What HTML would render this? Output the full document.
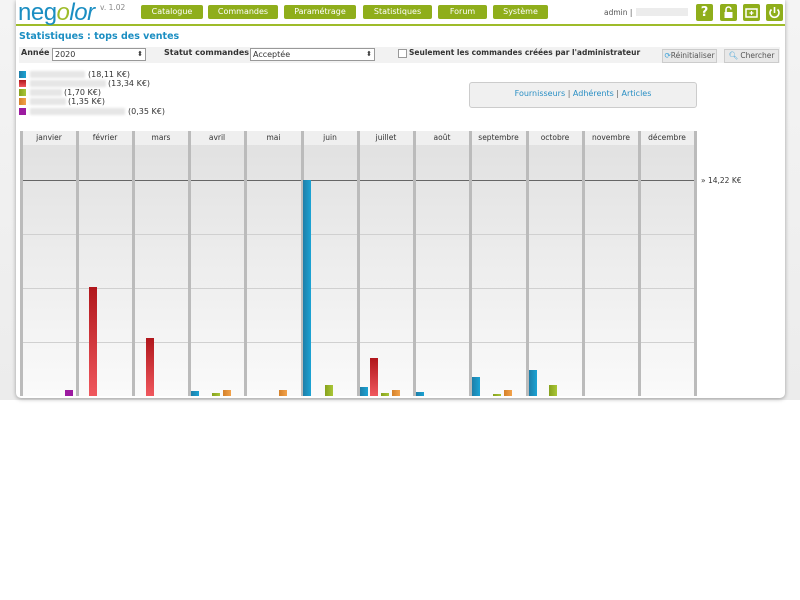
<!DOCTYPE html>
<html><head><meta charset="utf-8"><style>
body{margin:0;width:800px;height:600px;background:#fff;font-family:"DejaVu Sans","Liberation Sans",sans-serif;font-size:8px;color:#333;position:relative;overflow:hidden}
.bg{position:absolute;left:0;top:0;width:800px;height:400px;background:linear-gradient(#f4f4f4,#ececec)}
.wrap{position:absolute;left:16px;top:0;width:769px;height:398px;background:#fff;border-radius:0 0 5px 5px;box-shadow:0 1px 4px rgba(0,0,0,.35)}
.a{position:absolute}
.btn{position:absolute;top:5px;height:14px;background:#8fae1b;color:#fff;border-radius:2px;text-align:center;line-height:14px;font-size:8px}
.ico{position:absolute;top:4px;width:17px;height:17px;background:#8fae1b;border-radius:2px;color:#fff;font-weight:bold;text-align:center;line-height:17px;font-size:13px}
.sel{position:absolute;top:48px;height:11px;border:1px solid #999;background:#fff;font-size:8px;line-height:11px;padding-left:2px;box-sizing:content-box}
.sel:after{content:"⬍";position:absolute;right:2px;top:0;font-size:7px}
.sw{position:absolute;left:19px;width:7px;height:7px}
.blur{position:absolute;left:30px;height:7px;background:#e6e6e6;filter:blur(1px)}
.col{position:absolute;top:131px;height:265px;border-left:3px solid #bbb;box-sizing:border-box}
.hd{position:absolute;top:131px;height:14px;text-align:center;font-size:7.5px;line-height:14px;color:#333}
.bar{position:absolute;width:8px}
.b{background:linear-gradient(90deg,#1e7ea8,#1ba3d4)}
.r{background:linear-gradient(#b0161b,#f0585e)}
.g{background:linear-gradient(90deg,#87a21d,#a9c637)}
.o{background:linear-gradient(90deg,#d4812a,#f3a24a)}
.p{background:#9c1aa0}
</style></head><body>
<div class="bg"></div>
<div class="wrap"></div>
<div class="a" style="left:16px;top:24px;width:769px;height:2px;background:#9ebc2a"></div>
<div class="a" style="left:18px;top:-1px;font-family:'Liberation Sans',sans-serif;font-size:24px;color:#1b8ec2;letter-spacing:-0.5px">neg<span style="color:#9ebc2a;font-style:italic">o</span><span style="font-style:italic">lor</span></div>
<div class="a" style="left:100px;top:3px;font-size:7.5px;color:#888">v. 1.02</div>
<div class="btn" style="left:141px;width:62px">Catalogue</div>
<div class="btn" style="left:208px;width:70px">Commandes</div>
<div class="btn" style="left:284px;width:72px">Paramétrage</div>
<div class="btn" style="left:363px;width:69px">Statistiques</div>
<div class="btn" style="left:438px;width:49px">Forum</div>
<div class="btn" style="left:493px;width:55px">Système</div>
<div class="a" style="left:604px;top:8px;font-size:7.5px;color:#555">admin |</div>
<div class="a" style="left:636px;top:8px;width:52px;height:8px;background:#ececec"></div>
<div class="ico" style="left:696px">?</div>
<div class="ico" style="left:720px"><svg width="17" height="17" style="position:absolute;left:0;top:0"><rect x="4.5" y="8" width="8" height="6" fill="#fff"/><path d="M6 8V5.5a2.5 2.5 0 0 1 5 0" stroke="#fff" stroke-width="1.6" fill="none"/></svg></div>
<div class="ico" style="left:743px"><svg width="17" height="17" style="position:absolute;left:0;top:0"><rect x="3" y="5" width="11" height="8" fill="none" stroke="#fff" stroke-width="1.5"/><path d="M8.5 7v4M6.5 9h4" stroke="#fff" stroke-width="1.2"/></svg></div>
<div class="ico" style="left:766px"><svg width="17" height="17" style="position:absolute;left:0;top:0"><path d="M5.5 5.5a4.5 4.5 0 1 0 6 0" stroke="#fff" stroke-width="1.6" fill="none"/><path d="M8.5 3v6" stroke="#fff" stroke-width="1.6"/></svg></div>
<div class="a" style="left:19px;top:31px;font-size:9.5px;font-weight:bold;color:#1b8ec2">Statistiques : tops des ventes</div>
<div class="a" style="left:19px;top:47px;width:761px;height:16px;background:#f2f2f2"></div>
<div class="a" style="left:21px;top:48px;font-weight:bold">Année</div>
<div class="sel" style="left:52px;width:90px">2020</div>
<div class="a" style="left:164px;top:48px;font-weight:bold">Statut commandes</div>
<div class="sel" style="left:250px;width:121px">Acceptée</div>
<div class="a" style="left:398px;top:49px;width:7px;height:7px;border:1px solid #999;background:#fff"></div>
<div class="a" style="left:409px;top:48px;font-weight:bold;font-size:7.5px">Seulement les commandes créées par l'administrateur</div>
<div class="a" style="left:662px;top:49px;width:53px;height:12px;background:#e8e8e8;border:1px solid #ccc;font-size:7.5px;line-height:12px;text-align:center;color:#555"><span style="color:#3aa0d8">⟳</span>Réinitialiser</div>
<div class="a" style="left:724px;top:49px;width:53px;height:12px;background:#e8e8e8;border:1px solid #ccc;font-size:7.5px;line-height:12px;text-align:center;color:#555"><span style="color:#3aa0d8">🔍︎</span> Chercher</div>
<div class="sw b" style="top:71px"></div><div class="blur" style="top:71px;width:55px"></div><div class="a" style="left:88px;top:70px">(18,11 K€)</div>
<div class="sw r" style="top:80px"></div><div class="blur" style="top:80px;width:76px"></div><div class="a" style="left:108px;top:79px">(13,34 K€)</div>
<div class="sw g" style="top:89px"></div><div class="blur" style="top:89px;width:32px"></div><div class="a" style="left:64px;top:88px">(1,70 K€)</div>
<div class="sw o" style="top:98px"></div><div class="blur" style="top:98px;width:36px"></div><div class="a" style="left:68px;top:97px">(1,35 K€)</div>
<div class="sw p" style="top:108px"></div><div class="blur" style="top:108px;width:95px"></div><div class="a" style="left:128px;top:107px">(0,35 K€)</div>
<div class="a" style="left:469px;top:82px;width:226px;height:24px;background:#f0f0f0;border:1px solid #ccc;border-radius:3px;text-align:center;line-height:22px;color:#2a8fc4">Fournisseurs <span style="color:#666">|</span> Adhérents <span style="color:#666">|</span> Articles</div>
<div class="a" style="left:20px;top:131px;width:676px;height:265px;background:linear-gradient(#e0e0e0,#fafafa)"></div>
<div class="a" style="left:20px;top:131px;width:676px;height:14px;background:#efefef"></div>
<div class="a" style="left:20px;top:180px;width:676px;height:1px;background:#666"></div>
<div class="a" style="left:20px;top:234px;width:676px;height:1px;background:#d0d0d0"></div>
<div class="a" style="left:20px;top:288px;width:676px;height:1px;background:#d0d0d0"></div>
<div class="a" style="left:20px;top:342px;width:676px;height:1px;background:#d0d0d0"></div>
<div class="col" style="left:20px"></div><div class="col" style="left:76px"></div><div class="col" style="left:132px"></div><div class="col" style="left:188px"></div><div class="col" style="left:244px"></div><div class="col" style="left:301px"></div><div class="col" style="left:357px"></div><div class="col" style="left:413px"></div><div class="col" style="left:469px"></div><div class="col" style="left:526px"></div><div class="col" style="left:582px"></div><div class="col" style="left:638px"></div><div class="col" style="left:694px"></div>
<div class="hd" style="left:22px;width:54px">janvier</div><div class="hd" style="left:78px;width:54px">février</div><div class="hd" style="left:134px;width:54px">mars</div><div class="hd" style="left:190px;width:54px">avril</div><div class="hd" style="left:246px;width:55px">mai</div><div class="hd" style="left:303px;width:54px">juin</div><div class="hd" style="left:359px;width:54px">juillet</div><div class="hd" style="left:415px;width:54px">août</div><div class="hd" style="left:471px;width:55px">septembre</div><div class="hd" style="left:528px;width:54px">octobre</div><div class="hd" style="left:584px;width:54px">novembre</div><div class="hd" style="left:640px;width:54px">décembre</div>
<div class="a" style="left:701px;top:176px;font-size:7.5px">» 14,22 K€</div>
<div class="bar p" style="left:65px;top:390px;height:6px"></div>
<div class="bar r" style="left:89px;top:287px;height:109px"></div>
<div class="bar r" style="left:146px;top:338px;height:58px"></div>
<div class="bar b" style="left:191px;top:391px;height:5px"></div>
<div class="bar g" style="left:212px;top:393px;height:3px"></div>
<div class="bar o" style="left:223px;top:390px;height:6px"></div>
<div class="bar o" style="left:279px;top:390px;height:6px"></div>
<div class="bar b" style="left:303px;top:180px;height:216px"></div>
<div class="bar g" style="left:325px;top:385px;height:11px"></div>
<div class="bar b" style="left:360px;top:387px;height:9px"></div>
<div class="bar r" style="left:370px;top:358px;height:38px"></div>
<div class="bar g" style="left:381px;top:393px;height:3px"></div>
<div class="bar o" style="left:392px;top:390px;height:6px"></div>
<div class="bar b" style="left:416px;top:392px;height:4px"></div>
<div class="bar b" style="left:472px;top:377px;height:19px"></div>
<div class="bar g" style="left:493px;top:394px;height:2px"></div>
<div class="bar o" style="left:504px;top:390px;height:6px"></div>
<div class="bar b" style="left:529px;top:370px;height:26px"></div>
<div class="bar g" style="left:549px;top:385px;height:11px"></div>
</body></html>
